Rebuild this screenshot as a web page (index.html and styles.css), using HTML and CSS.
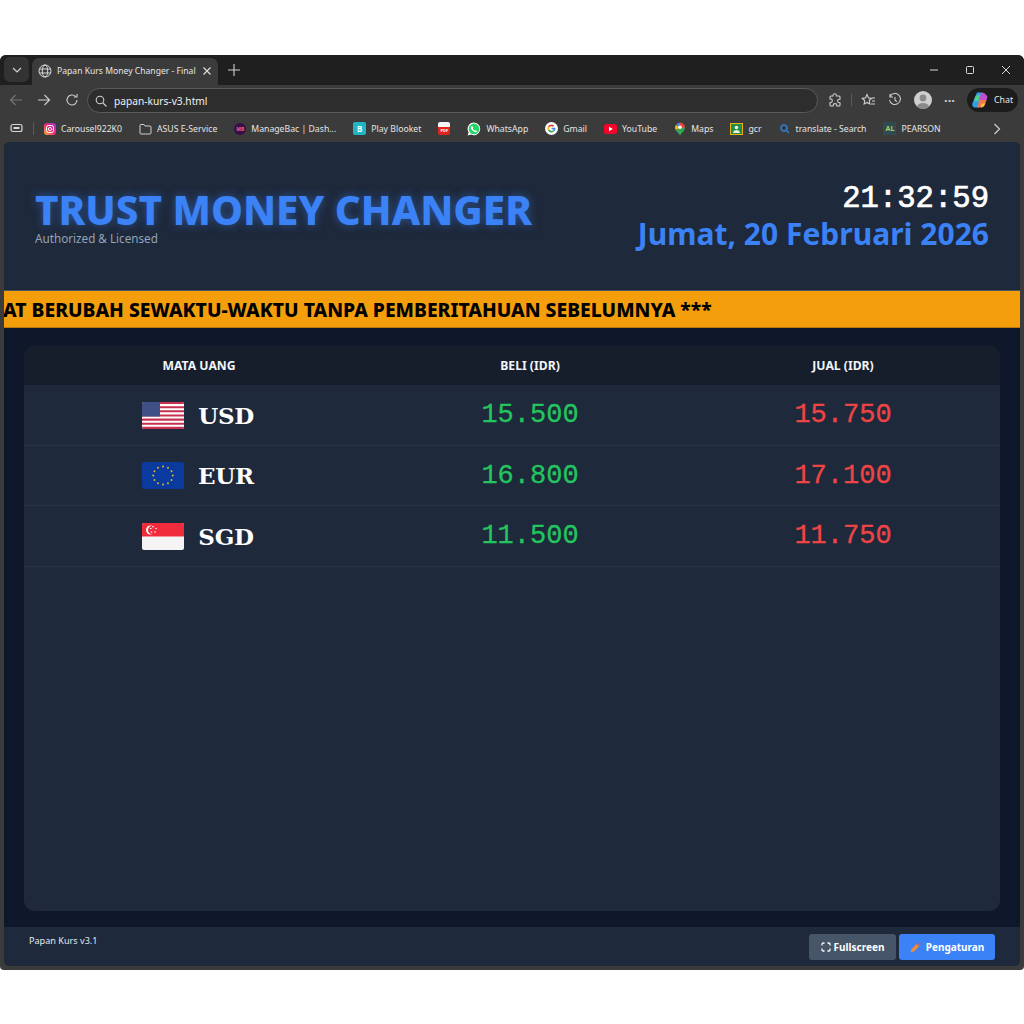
FILE: index.html
```html
<!DOCTYPE html>
<html lang="en">
  <head>
    <meta charset="UTF-8" />
    <title>Papan Kurs Money Changer</title>
    <link rel="stylesheet" href="styles.css">
  </head>
  <body>
    <div class="browser">
      <!-- Tab strip -->
      <div class="tabstrip">
        <div class="tab-menu">
          <svg width="10" height="10" viewBox="0 0 10 10"><path d="M1 3l4 4 4-4" fill="none" stroke="#d0d0d0" stroke-width="1.2"/></svg>
        </div>
        <div class="tab">
          <svg width="14" height="14" viewBox="0 0 14 14" fill="none" stroke="#d8d8d8" stroke-width="1"><circle cx="7" cy="7" r="6"/><ellipse cx="7" cy="7" rx="2.7" ry="6"/><path d="M1.4 5h11.2M1.4 9h11.2"/></svg>
          <span class="tab-title">Papan Kurs Money Changer - Final</span>
          <svg width="10" height="10" viewBox="0 0 10 10"><path d="M1.5 1.5l7 7M8.5 1.5l-7 7" stroke="#e0e0e0" stroke-width="1.1"/></svg>
        </div>
        <svg class="new-tab" width="12" height="12" viewBox="0 0 12 12"><path d="M6 0v12M0 6h12" stroke="#d0d0d0" stroke-width="1.1"/></svg>
        <div class="window-controls">
          <svg width="10" height="10" viewBox="0 0 10 10"><path d="M1 5h8" stroke="#d8d8d8"/></svg>
          <svg width="10" height="10" viewBox="0 0 10 10"><rect x="1.5" y="1.5" width="7" height="7" rx="1" fill="none" stroke="#d8d8d8"/></svg>
          <svg width="10" height="10" viewBox="0 0 10 10"><path d="M1 1l8 8M9 1l-8 8" stroke="#d8d8d8"/></svg>
        </div>
      </div>

      <!-- Address bar -->
      <div class="toolbar">
        <svg width="14" height="14" viewBox="0 0 14 14" fill="none" stroke="#777" stroke-width="1.1"><path d="M13 7H1.5M6.5 2l-5 5 5 5"/></svg>
        <svg width="14" height="14" viewBox="0 0 14 14" fill="none" stroke="#d0d0d0" stroke-width="1.1"><path d="M1 7h11.5M7.5 2l5 5-5 5"/></svg>
        <svg width="14" height="14" viewBox="0 0 14 14" fill="none" stroke="#d0d0d0" stroke-width="1.1"><path d="M12 7a5 5 0 1 1-1.5-3.6M12 1v3h-3"/></svg>
        <div class="address">
          <svg width="12" height="12" viewBox="0 0 12 12" fill="none" stroke="#d0d0d0" stroke-width="1.1"><circle cx="5" cy="5" r="3.8"/><path d="M8 8l3.5 3.5"/></svg>
          <span>papan-kurs-v3.html</span>
        </div>
        <div class="toolbar-right">
          <svg width="14" height="14" viewBox="0 0 14 14" fill="none" stroke="#cfcfcf" stroke-width="1.1"><path d="M5 2.500a1.700 1.700 0 0 1 3.400 0V3H11a1 1 0 0 1 1 1v2.200h-.6a1.800 1.800 0 0 0 0 3.600h.6V12a1 1 0 0 1-1 1H8.800v-.6a1.800 1.800 0 0 0-3.600 0v.6H3a1 1 0 0 1-1-1V9.500h.5a1.800 1.800 0 0 0 0-3.600H2V4a1 1 0 0 1 1-1h2z"/></svg>
          <span class="tb-divider"></span>
          <svg width="15" height="14" viewBox="0 0 15 14" fill="none" stroke="#cfcfcf" stroke-width="1.1"><path d="M6 1.500l1.500 3.400 3 .4-2.300 2.200.6 3.500L6 9.400 3.100 11l.6-3.500L1.300 5.300l3.200-.4z"/><path d="M11 5h3M11 8h3M10 11h4"/></svg>
          <svg width="14" height="14" viewBox="0 0 14 14" fill="none" stroke="#cfcfcf" stroke-width="1.1"><path d="M2 3.500A5.500 5.500 0 1 1 1.500 7M2 1v3h3M7 4v3.200l2 1.300"/></svg>
          <svg width="18" height="18" viewBox="0 0 18 18"><circle cx="9" cy="9" r="9" fill="#cfcfcf"/><circle cx="9" cy="7" r="3.400" fill="#8a8a8a"/><path d="M2.800 15.500a6.500 5 0 0 1 12.400 0A9 9 0 0 1 2.800 15.500z" fill="#8a8a8a"/></svg>
          <span class="more">···</span>
          <div class="chat">
            <svg width="18" height="18" viewBox="0 0 18 18"><path d="M6 1.500h5L7.500 16.500H4C1.500 16.500.8 14 1.500 12z" fill="#2f9fe8"/><path d="M10 1.500c3.500 0 5 1.500 6.500 4.500L15 10H8.500z" fill="#c04fd0"/><path d="M8 9h7.500L14 13.500c-.7 2-2.200 3-4.500 3H6.500z" fill="#f2784b"/><path d="M4.500 5L9 3.500 7.500 10H3z" fill="#4fd18a"/><path d="M10 13l4-1-.5 2c-.5 1.500-2 2.500-3.500 2.500z" fill="#f5c33b"/></svg>
            <span>Chat</span>
          </div>
        </div>
      </div>

      <!-- Bookmarks -->
      <div class="bookmarks">
        <svg width="13" height="11" viewBox="0 0 13 11" fill="none" stroke="#d8d8d8" stroke-width="1.2"><rect x="1" y="1.500" width="11" height="7" rx="2"/><path d="M3.500 5h6" stroke-width="2"/></svg>
        <span class="bm-divider"></span>
        <div class="bm-list">
          <span class="bm">
            <svg width="12" height="12" viewBox="0 0 12 12">
              <defs><linearGradient id="insta" x1="0" y1="1" x2="1" y2="0"><stop offset="0" stop-color="#fbb02d"/><stop offset=".5" stop-color="#ee2a7b"/><stop offset="1" stop-color="#8a3ad6"/></linearGradient></defs>
              <rect width="12" height="12" rx="3" fill="url(#insta)"/>
              <rect x="2.500" y="2.500" width="7" height="7" rx="2" fill="none" stroke="#fff" stroke-width="1"/>
              <circle cx="6" cy="6" r="1.600" fill="none" stroke="#fff"/>
            </svg>
            Carousel922K0
          </span>
          <span class="bm"><svg width="13" height="12" viewBox="0 0 13 12" fill="none" stroke="#d0d0d0"><path d="M1 10V2.500C1 2 1.300 1.500 2 1.500h3L6 3h5c.6 0 1 .4 1 1v6c0 .6-.4 1-1 1H2c-.6 0-1-.4-1-1z"/></svg>ASUS E-Service</span>
          <span class="bm"><i class="ic ic-mb">MB</i>ManageBac | Dash...</span>
          <span class="bm"><i class="ic ic-blooket">B</i>Play Blooket</span>
          <span class="bm"><i class="ic ic-pdf">PDF</i></span>
          <span class="bm"><svg width="14" height="14" viewBox="0 0 14 14"><path d="M7 .6a6.300 6.300 0 0 0-5.400 9.600L.7 13.400l3.300-.9A6.300 6.300 0 1 0 7 .6z" fill="#fff"/><circle cx="7" cy="6.900" r="5.300" fill="#25d366"/><path d="M5 3.800c-.9.400-1.200 1.500-.8 2.600.6 1.600 2 3 3.600 3.600 1.100.4 2 .1 2.500-.8l-1.600-1-.7.600C7.200 8.400 6.200 7.400 5.800 6.600l.6-.8z" fill="#fff"/></svg>WhatsApp</span>
          <span class="bm"><svg width="13" height="13" viewBox="0 0 13 13"><circle cx="6.500" cy="6.500" r="6.500" fill="#fff"/><path d="M6.500 2.500a4 4 0 0 1 2.700 1L8 4.700A2.400 2.400 0 0 0 4.300 5.500L3 4.500a4 4 0 0 1 3.500-2z" fill="#ea4335"/><path d="M3 4.500l1.300 1a2.400 2.400 0 0 0 0 2L3 8.500a4 4 0 0 1 0-4z" fill="#fbbc05"/><path d="M3 8.500l1.300-1A2.400 2.400 0 0 0 8 8.300l1.200 1A4 4 0 0 1 3 8.500z" fill="#34a853"/><path d="M10.400 5.700H6.500v1.600h2.200A2 2 0 0 1 8 8.300l1.200 1c.9-.8 1.400-2.100 1.200-3.600z" fill="#4285f4"/></svg>Gmail</span>
          <span class="bm"><svg width="13" height="10" viewBox="0 0 13 10"><rect width="13" height="10" rx="2.500" fill="#f2062a"/><path d="M5 2.800v4.400L8.800 5z" fill="#fff"/></svg>YouTube</span>
          <span class="bm"><svg width="12" height="14" viewBox="0 0 12 14"><path d="M6 .5A5 5 0 0 1 11 5.500L6 8z" fill="#ea4335"/><path d="M6 .5A5 5 0 0 0 2 3l4 3z" fill="#4285f4"/><path d="M2 3a5 5 0 0 0-1 2.500c0 .9.300 1.700.7 2.400L6 6z" fill="#fbbc05"/><path d="M1.700 7.900C3 10 5 11 6 13.500c1-2.500 3-3.500 4.300-5.600.5-.8.700-1.600.7-2.400L6 6z" fill="#34a853"/><circle cx="6" cy="5.300" r="1.800" fill="#fff"/></svg>Maps</span>
          <span class="bm"><svg width="13" height="12" viewBox="0 0 13 12"><rect x=".5" y=".5" width="12" height="11" fill="#1f8e4b" stroke="#e8b21a"/><circle cx="6.500" cy="4.500" r="1.800" fill="#f5f0d8"/><path d="M3 10c.3-2 1.700-3 3.500-3s3.200 1 3.500 3z" fill="#f5f0d8"/></svg>gcr</span>
          <span class="bm"><svg width="12" height="12" viewBox="0 0 12 12" fill="none" stroke="#2a7fd0" stroke-width="1.500"><circle cx="5" cy="5" r="3"/><path d="M7.300 7.300L10 10"/></svg>translate - Search</span>
          <span class="bm"><i class="ic ic-pearson">AL</i>PEARSON</span>
        </div>
        <svg class="bm-more" width="8" height="12" viewBox="0 0 8 12" fill="none" stroke="#cfcfcf" stroke-width="1.200"><path d="M1.500 1l5 5-5 5"/></svg>
      </div>

      <!-- Page -->
      <div class="page">
        <header class="board-header">
          <div class="brand">
            <h1>TRUST MONEY CHANGER</h1>
            <p>Authorized &amp; Licensed</p>
          </div>
          <div class="datetime">
            <div class="clock">21:32:59</div>
            <div class="date">Jumat, 20 Februari 2026</div>
          </div>
        </header>

        <div class="ticker"><span>AT BERUBAH SEWAKTU-WAKTU TANPA PEMBERITAHUAN SEBELUMNYA ***</span></div>

        <main class="board">
          <div class="rates">
            <div class="rates-head">
              <span>MATA UANG</span>
              <span>BELI (IDR)</span>
              <span>JUAL (IDR)</span>
            </div>
            <div class="rate-row">
              <div class="currency">
                <svg class="flag" viewBox="0 0 42 27">
                  <rect width="42" height="27" fill="#fff"/>
                  <path d="M0 1h42M0 5.200h42M0 9.300h42M0 13.500h42M0 17.600h42M0 21.800h42M0 25.900h42" stroke="#c8304f" stroke-width="2.100"/>
                  <rect width="18" height="14.500" fill="#3f4f85"/>
                </svg>
                <span class="code">USD</span>
              </div>
              <div class="buy">15.500</div>
              <div class="sell">15.750</div>
            </div>
            <div class="rate-row">
              <div class="currency">
                <svg class="flag" viewBox="0 0 42 27">
                  <rect width="42" height="27" fill="#0b3a9e"/>
                  <g fill="#d9b62a">
                    <circle cx="21" cy="4.500" r="1"/><circle cx="26" cy="5.800" r="1"/><circle cx="29.500" cy="9.300" r="1"/><circle cx="30.800" cy="13.500" r="1"/><circle cx="29.500" cy="18" r="1"/><circle cx="26" cy="21.200" r="1"/><circle cx="21" cy="22.500" r="1"/><circle cx="16" cy="21.200" r="1"/><circle cx="12.500" cy="18" r="1"/><circle cx="11.200" cy="13.500" r="1"/><circle cx="12.500" cy="9.300" r="1"/><circle cx="16" cy="5.800" r="1"/>
                  </g>
                </svg>
                <span class="code">EUR</span>
              </div>
              <div class="buy">16.800</div>
              <div class="sell">17.100</div>
            </div>
            <div class="rate-row">
              <div class="currency">
                <svg class="flag" viewBox="0 0 42 27">
                  <rect width="42" height="27" fill="#f4f4f4"/>
                  <rect width="42" height="13.500" fill="#ef2b3c"/>
                  <circle cx="8.500" cy="7" r="4.500" fill="#fff"/>
                  <circle cx="10.300" cy="7" r="4.300" fill="#ef2b3c"/>
                  <g fill="#fff">
                    <circle cx="11" cy="3.800" r=".8"/><circle cx="14" cy="5.500" r=".8"/><circle cx="13" cy="9" r=".8"/><circle cx="9.500" cy="9" r=".8"/><circle cx="8.800" cy="5.500" r=".8"/>
                  </g>
                </svg>
                <span class="code">SGD</span>
              </div>
              <div class="buy">11.500</div>
              <div class="sell">11.750</div>
            </div>
          </div>
        </main>

        <footer class="board-footer">
          <span class="version">Papan Kurs v3.1</span>
          <div class="footer-actions">
            <button class="btn btn-gray">
              <svg width="10" height="10" viewBox="0 0 10 10" fill="none" stroke="#fff" stroke-width="1.300"><path d="M1 3.500V2.200C1 1.500 1.500 1 2.200 1h1.300M6.500 1h1.300C8.500 1 9 1.500 9 2.200v1.300M9 6.500v1.300C9 8.500 8.500 9 7.800 9H6.500M3.500 9H2.200C1.500 9 1 8.500 1 7.800V6.500"/></svg>
              Fullscreen
            </button>
            <button class="btn btn-blue">
              <svg width="11" height="11" viewBox="0 0 11 11"><path d="M.5 10.500l1-3.500 5-5 2.500 2.500-5 5z" fill="#f08a3c"/><path d="M7 1.500l1-1L10.500 3l-1 1z" fill="#e85d4a"/></svg>
              Pengaturan
            </button>
          </div>
        </footer>
      </div>
    </div>
  </body>
</html>
```

FILE: styles.css
```css
/* General */
* {
  box-sizing: border-box;
}

body {
  margin: 0;
  background: #ffffff;
  font-family: "Noto Sans", sans-serif;
  height: 1024px;
  padding-top: 55px;
}

/* Browser window */
.browser {
  height: 915px;
  width: 1024px;
  background: #3b3b3b;
  border-radius: 6px 6px 4px 4px;
  display: flex;
  flex-direction: column;
  overflow: hidden;
}

.tabstrip {
  height: 30px;
  background: #1f1f1f;
  display: flex;
  align-items: flex-end;
  padding-left: 4px;
  flex-shrink: 0;
}

.tab-menu {
  width: 25px;
  height: 25px;
  margin-bottom: 3px;
  background: #333333;
  border-radius: 6px;
  display: flex;
  align-items: center;
  justify-content: center;
}

.tab {
  width: 186px;
  height: 27px;
  margin-left: 3px;
  background: #3b3b3b;
  border-radius: 7px 7px 0 0;
  display: flex;
  align-items: center;
  padding: 0 6px 2px;
  gap: 5px;
  color: #e6e6e6;
  font-size: 8.6px;
}

.tab-title {
  flex: 1;
  white-space: nowrap;
  overflow: hidden;
}

.new-tab {
  margin: 0 0 9px 10px;
}

.window-controls {
  margin-left: auto;
  display: flex;
  gap: 26px;
  margin-right: 13px;
  margin-bottom: 10px;
}

.toolbar {
  height: 30px;
  display: flex;
  align-items: center;
  padding: 0 6px 0 9px;
  gap: 14px;
  flex-shrink: 0;
}

.toolbar svg {
  flex-shrink: 0;
}

.address {
  width: 731px;
  height: 25px;
  flex-shrink: 0;
  margin-left: -6px;
  border: 1px solid #5a5a5a;
  border-radius: 13px;
  background: #2d2d2d;
  display: flex;
  align-items: center;
  gap: 7px;
  padding: 1px 0 0 7px;
  color: #f0f0f0;
  font-size: 10.2px;
}

.toolbar-right {
  flex: 1;
  display: flex;
  align-items: center;
  gap: 12px;
  margin-left: -4px;
}

.tb-divider {
  width: 1px;
  height: 12px;
  background: #5a5a5a;
  margin: 0 -3px;
}

.more {
  width: 11px;
  display: flex;
  justify-content: center;
  color: #cfcfcf;
  font-size: 13px;
  font-weight: 700;
}

.chat {
  margin-left: auto;
  height: 24px;
  width: 51px;
  flex-shrink: 0;
  background: #1c1c1c;
  border-radius: 12px;
  display: flex;
  align-items: center;
  gap: 5px;
  padding-left: 4px;
  color: #e6e6e6;
  font-size: 8.8px;
}

.bookmarks {
  height: 27px;
  display: flex;
  align-items: center;
  padding-left: 10px;
  flex-shrink: 0;
}

.bm-divider {
  width: 1px;
  height: 13px;
  background: #5a5a5a;
  margin: 0 10px;
}

.bm-list {
  display: flex;
  align-items: center;
  gap: 17px;
}

.bm {
  display: flex;
  align-items: center;
  gap: 5px;
  color: #e4e4e4;
  font-size: 8.7px;
  white-space: nowrap;
}

.bm-more {
  margin-left: auto;
  margin-right: 23px;
}

.ic {
  width: 12px;
  height: 12px;
  display: flex;
  align-items: center;
  justify-content: center;
  font-style: normal;
  font-size: 5px;
  font-weight: 700;
  color: #ffffff;
}

.ic-mb {
  border-radius: 50%;
  background: #3a0d45;
  color: #e0689a;
}

.ic-blooket {
  width: 13px;
  height: 13px;
  border-radius: 2px;
  background: #1fb7c4;
  font-size: 8px;
}

.ic-pdf {
  height: 13px;
  background: linear-gradient(#f5f5f5 35%, #e2231a 35%);
  border-radius: 2px;
  font-size: 4px;
  padding-top: 3px;
}

.ic-pearson {
  width: 13px;
  height: 13px;
  background: #2f4a50;
  color: #a8cf5a;
  font-size: 7px;
}

/* Page */
.page {
  flex: 1;
  margin: 0 4px 4px 4px;
  background: #0f172a;
  border-radius: 6px;
  display: flex;
  flex-direction: column;
  overflow: hidden;
  min-height: 0;
}

.board-header {
  height: 149px;
  background: #1e293b;
  display: flex;
  justify-content: space-between;
  align-items: center;
  padding: 0 31px;
  border-bottom: 1px solid #4b5563;
  flex-shrink: 0;
}

.brand {
  padding-top: 1px;
}

h1 {
  margin: 0;
  color: #3b82f6;
  font-size: 40.3px;
  font-weight: 800;
  line-height: 43px;
  text-shadow: 0 0 10px rgba(59, 130, 246, 0.5);
}

.brand p {
  margin: 0;
  color: #94a3b8;
  font-size: 11.7px;
  line-height: 14px;
}

.datetime {
  text-align: right;
}

.clock {
  padding-top: 1px;
  color: #ffffff;
  font-family: "Liberation Mono", monospace;
  font-size: 30.6px;
  line-height: 34px;
  -webkit-text-stroke: 0.7px #ffffff;
}

.date {
  color: #3b82f6;
  font-size: 30px;
  font-weight: 700;
  line-height: 35px;
}

.ticker {
  height: 37px;
  flex-shrink: 0;
  background: #f59e0b;
  color: #000000;
  display: flex;
  align-items: center;
  padding-top: 1px;
  overflow: hidden;
  white-space: nowrap;
  font-size: 19.3px;
  font-weight: 800;
  border-bottom: 1px solid #b97a10;
}

.ticker span {
  margin-left: -1px;
}

.board {
  flex: 1;
  padding: 18px 20px 16px;
  display: flex;
  min-height: 0;
}

.rates {
  flex: 1;
  background: #1e293b;
  border-radius: 10px;
  overflow: hidden;
}

.rates-head,
.rate-row {
  display: grid;
  grid-template-columns: 350px 312px 1fr;
  align-items: center;
  text-align: center;
}

.rates-head {
  height: 39px;
  background: #161e2c;
  color: #f1f5f9;
  font-size: 12.2px;
  font-weight: 700;
}

.rate-row {
  height: 60.5px;
  padding-top: 1px;
  border-bottom: 1px solid #27334a;
}

.currency {
  display: flex;
  align-items: center;
  justify-content: center;
  gap: 14px;
  padding-right: 2px;
}

.flag {
  width: 42px;
  height: 27px;
  border-radius: 2px;
}

.code {
  width: 56px;
  color: #ffffff;
  font-family: "DejaVu Serif", serif;
  font-size: 23px;
  font-weight: 700;
  letter-spacing: -0.3px;
}

.buy,
.sell {
  font-family: "Liberation Mono", monospace;
  font-size: 27px;
  -webkit-text-stroke: 0.3px currentColor;
}

.buy {
  color: #22c55e;
}

.sell {
  color: #ef4444;
}

/* Footer */
.board-footer {
  height: 39px;
  flex-shrink: 0;
  background: #1e293b;
  display: flex;
  justify-content: space-between;
  padding: 7px 25px 0 25px;
}

.version {
  color: #e2e8f0;
  font-size: 9.1px;
  line-height: 14px;
}

.footer-actions {
  display: flex;
  gap: 3px;
  height: 26px;
}

.btn {
  border: none;
  border-radius: 3px;
  color: #ffffff;
  font-family: "Noto Sans", sans-serif;
  font-size: 10px;
  font-weight: 700;
  display: flex;
  align-items: center;
  justify-content: center;
  gap: 3px;
  padding: 0;
}

.btn-gray {
  width: 87px;
  background: #475569;
}

.btn-blue {
  width: 96px;
  gap: 5px;
  background: #3b82f6;
}
```
